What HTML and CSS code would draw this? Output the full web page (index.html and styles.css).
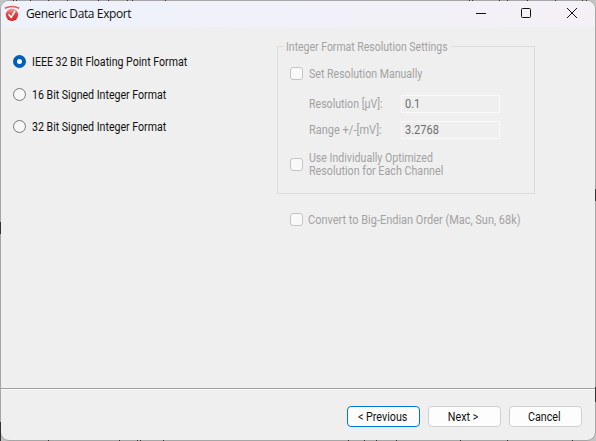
FILE: index.html
```html
<!DOCTYPE html>
<html lang="en">
<head>
<meta charset="utf-8">
<title>Generic Data Export</title>
<link rel="stylesheet" href="styles.css">
</head>
<body>
<div class="window">
  <header class="titlebar">
    <svg class="logo" width="16" height="17" viewBox="0 0 16 17">
      <defs><linearGradient id="red" x1="0" y1="0" x2="0" y2="1"><stop offset="0" stop-color="#f4a39f"/><stop offset=".45" stop-color="#df4744"/><stop offset="1" stop-color="#d92025"/></linearGradient></defs>
      <circle cx="8" cy="9.8" r="6.2" fill="url(#red)"/>
      <path d="M.8 3.2Q8-.2 15.2 3.2" fill="none" stroke="#df5c5a" stroke-width="1.5"/>
      <path d="M4.6 9.2l2.6 3.2L11 6" fill="none" stroke="#fff" stroke-width="1.6"/>
    </svg>
    <h1 class="title">Generic Data Export</h1>
    <svg class="controls" width="104" height="12" viewBox="0 0 104 12" fill="none" stroke="#111" stroke-width="1">
      <path d="M1 6.5h10"/>
      <rect x="46.5" y="1.5" width="9" height="9" rx="1"/>
      <path d="M92 1l10 10M102 1l-10 10"/>
    </svg>
  </header>
  <main class="content">
    <div class="formats">
      <label class="option"><span class="radio checked"></span><span class="text low">IEEE 32 Bit Floating Point Format</span></label>
      <label class="option"><span class="radio"></span><span class="text low">16 Bit Signed Integer Format</span></label>
      <label class="option"><span class="radio"></span><span class="text low">32 Bit Signed Integer Format</span></label>
    </div>
    <div class="settings">
      <fieldset class="group">
        <legend class="legend"><span class="text low">Integer Format Resolution Settings</span></legend>
        <div class="check manual"><span class="box"></span><span class="text low">Set Resolution Manually</span></div>
        <div class="fields">
          <span class="text">Resolution [µV]:</span><span class="field"><span class="text wide">0.1</span></span>
          <span class="text wide">Range +/-[mV]:</span><span class="field"><span class="text wide">3.2768</span></span>
        </div>
        <div class="check individual"><span class="box"></span><span><span class="text low">Use Individually Optimized</span><br><span class="text low channel">Resolution for Each Channel</span></span></div>
      </fieldset>
      <div class="check endian"><span class="box"></span><span class="text low wide">Convert to Big-Endian Order (Mac, Sun, 68k)</span></div>
    </div>
  </main>
  <footer class="footer">
    <button class="button primary"><span class="text centered">&lt; Previous</span></button>
    <button class="button"><span class="text centered">Next &gt;</span></button>
    <button class="button"><span class="text centered">Cancel</span></button>
  </footer>
</div>
<svg class="edges" width="596" height="441" viewBox="0 0 596 441" fill="none" stroke="#333">
  <path d="M.5 222v12M.5 422v19M595.5 189v12M595.5 387v15"/>
  <path d="M13 .5h1M16 .5h1M30 .5h1M48 .5h1M67 .5h1M98 .5h1M108 .5h1M127 .5h1M132 .5h1M165 .5h1M469 .5h1M472 .5h1M499 .5h1M507 .5h1M527 .5h1M555 .5h1M582 .5h1M586 .5h1M48 440.5h1M119 440.5h1M137 440.5h1M140 440.5h1M163 440.5h1M348 440.5h1M364 440.5h1M376 440.5h1M396 440.5h1M460 440.5h1M507 440.5h1M572 440.5h1"/>
</svg>
</body>
</html>
```
FILE: styles.css
```css
* { box-sizing: border-box; }
body { margin: 0; background: #c4c4c4; font: 12px/13px Roboto, "Liberation Sans", sans-serif; color: #111; }
.window { width: 596px; height: 441px; border: 1px solid #a6a6a6; border-radius: 9px; background: #efefef; overflow: hidden; display: flex; flex-direction: column; }
.edges { position: absolute; left: 0; top: 0; pointer-events: none; }
.titlebar { height: 26px; flex: none; display: flex; align-items: center; padding: 0 16px 0 3px; background: linear-gradient(90deg, #eef2fb, #f4f0f6); }
.logo { margin-top: -1px; }
.title { margin: 0 0 0 6px; font: 400 12px/16px "Open Sans", sans-serif; letter-spacing: -.38px; }
.controls { margin-left: auto; margin-top: -2px; }
.text { display: inline-block; vertical-align: top; transform: scaleX(.883); transform-origin: 0 0; }
.text.wide { transform: scaleX(.918); }
.text.low { transform: translateY(1px) scaleX(.883); }
.text.low.wide { transform: translateY(1px) scaleX(.914); }
.text.channel { transform: translateY(1px) scaleX(.893); }
.text.centered { transform: translate(-1px, 1px) scaleX(.895); transform-origin: 50% 0; }
.content { height: 361px; flex: none; display: flex; }
.formats { width: 276px; padding: 27px 0 0 12px; }
.option { display: flex; align-items: center; height: 15px; margin-bottom: 17.5px; gap: 6px; white-space: nowrap; }
.radio { width: 13px; height: 13px; border: 1px solid #777; border-radius: 50%; background: #f7f7f7; flex: none; }
.checked { border: 4px solid #005fb8; background: #fff; }
.settings { width: 258px; padding-top: 13px; color: #a2a2a2; white-space: nowrap; }
.group { margin: 0; height: 154px; min-width: 0; border: 1px solid #dcdcdc; padding: 13px 0 0 12px; }
.legend { width: 167px; padding: 0 0 0 2px; margin-left: -6px; }
.legend .text { transform: translateY(1px) scaleX(.873); }
.check { display: flex; align-items: center; gap: 6px; }
.box { width: 13px; height: 13px; flex: none; border: 1px solid #c5c5c5; border-radius: 3px; background: #f9f9f9; }
.manual { height: 15px; }
.fields { display: grid; grid-template-columns: 91px 100px; column-gap: 0; row-gap: 8px; margin: 14px 0 0 19px; align-items: center; }
.field { height: 18px; padding: 2px 3px; margin-left: 1px; border: 1px solid #f9f9f9; color: #6d6d6d; }
.individual { margin-top: 12px; }
.endian { margin: 19px 0 0 13px; gap: 5px; }
.footer { flex: 1; border-top: 1px solid #a0a0a0; box-shadow: inset 0 1px #fff; padding: 17px 13px 0; display: flex; justify-content: flex-end; gap: 8px; }
.button { width: 73px; height: 21px; padding: 0; border: 1px solid #d0d0d0; border-radius: 4px; background: #fdfdfd; font: inherit; color: #111; }
.primary { border-color: #0078d4; }
```
